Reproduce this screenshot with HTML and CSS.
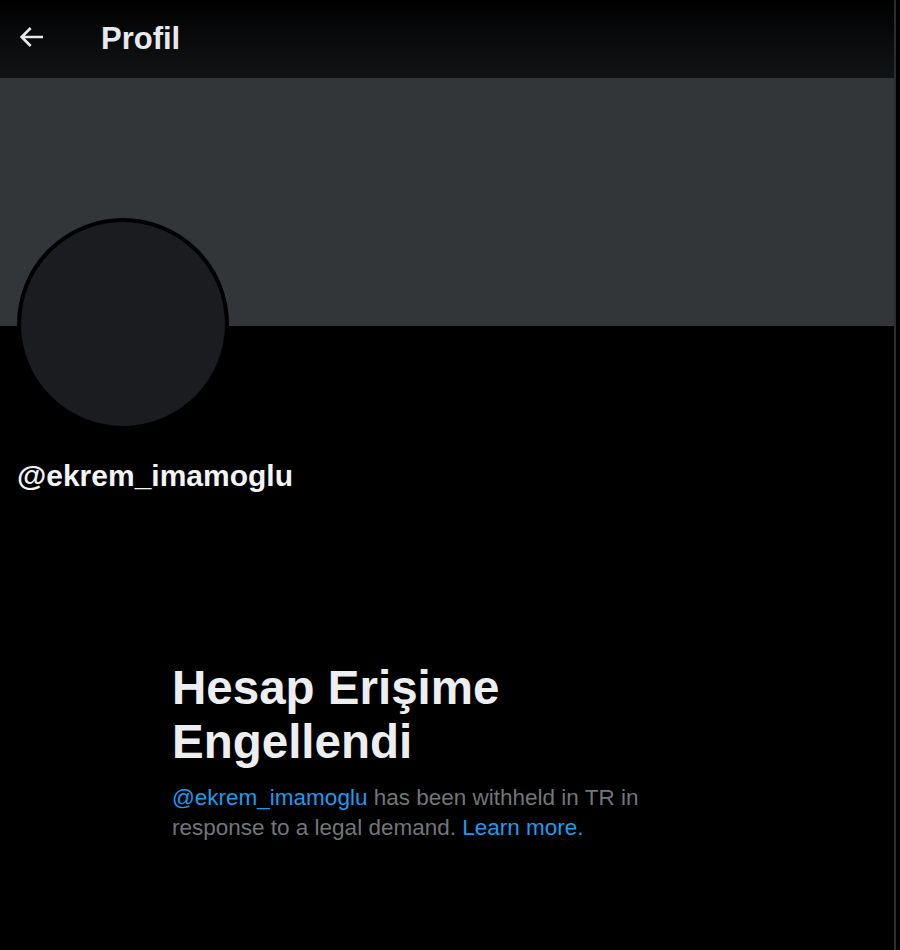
FILE: index.html
```html
<!DOCTYPE html>
<html lang="tr">
<head>
    <meta charset="UTF-8">
    <meta name="viewport" content="width=device-width, initial-scale=1.0">
    <title>Profil</title>
    <link rel="stylesheet" href="styles.css">
</head>
<body>
    <div class="page">
        <header class="top-bar">
            <a href="#" class="back-button" aria-label="Geri">
                <svg viewBox="0 0 24 24" width="32" height="32"><path d="M7.414 13l5.043 5.04-1.414 1.42L3.586 12l7.457-7.46 1.414 1.42L7.414 11H21v2H7.414z"></path></svg>
            </a>
            <h2 class="top-title">Profil</h2>
        </header>

        <div class="banner"></div>

        <div class="profile-head">
            <div class="avatar"></div>
            <div class="handle">@ekrem_imamoglu</div>
        </div>

        <div class="withheld">
            <h1>Hesap Erişime Engellendi</h1>
            <p><a href="#">@ekrem_imamoglu</a> has been withheld in TR in response to a legal demand. <a href="#">Learn more.</a></p>
        </div>
    </div>
</body>
</html>
```

FILE: styles.css
```css
body {
    margin: 0;
    background-color: #000;
    font-family: "Liberation Sans", Arial, sans-serif;
    color: #e7e9ea;
}

.page {
    width: 896px;
    min-height: 950px;
    border-right: 2px solid #2a2d30;
    box-sizing: border-box;
}

.top-bar {
    height: 78px;
    display: flex;
    align-items: center;
    background: linear-gradient(to bottom, #000 0%, #121416 100%);
}

.back-button {
    display: flex;
    margin-left: 15px;
    margin-top: -4px;
    fill: #e7e9ea;
}

.top-title {
    margin: 0 0 0 54px;
    font-size: 31px;
    font-weight: bold;
    color: #e7e9ea;
}

.banner {
    height: 248px;
    background-color: #333639;
}

.profile-head {
    padding-left: 17px;
}

.avatar {
    width: 204px;
    height: 204px;
    margin-top: -108px;
    border: 4px solid #000;
    border-radius: 50%;
    background-color: #1b1c20;
}

.handle {
    margin-top: 29px;
    font-size: 30px;
    font-weight: bold;
    color: #f2f4f5;
}

.withheld {
    width: 500px;
    margin: 168px 0 0 172px;
}

.withheld h1 {
    margin: 0;
    font-size: 47.5px;
    line-height: 54px;
    font-weight: bold;
    color: #eceeef;
}

.withheld p {
    margin: 14px 0 0;
    font-size: 22.5px;
    line-height: 30px;
    color: #71767b;
}

.withheld a {
    color: #1d9bf0;
    text-decoration: none;
}
```
